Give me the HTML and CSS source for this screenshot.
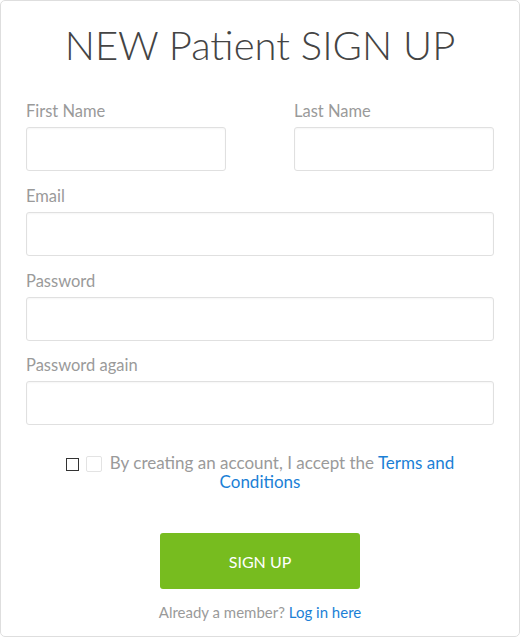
FILE: index.html
```html
<!DOCTYPE html>
<html>
<head>
<meta charset="utf-8">
<link rel="stylesheet" href="styles.css">
</head>
<body>
<div class="card">
  <h1 class="title">NEW Patient SIGN UP</h1>
  <form class="form">
    <div class="row-two">
      <div class="group">
        <label class="label">First Name</label>
        <input class="input" type="text">
      </div>
      <div class="group">
        <label class="label">Last Name</label>
        <input class="input" type="text">
      </div>
    </div>
    <div class="group">
      <label class="label">Email</label>
      <input class="input" type="text">
    </div>
    <div class="group">
      <label class="label">Password</label>
      <input class="input" type="password">
    </div>
    <div class="group">
      <label class="label">Password again</label>
      <input class="input" type="password">
    </div>
    <div class="terms">
      <span class="box box-dark"></span><span class="box box-light"></span>By creating an account, I accept the <a class="link" href="#">Terms and Conditions</a>
    </div>
    <div class="actions">
      <button class="btn" type="button">SIGN UP</button>
    </div>
    <p class="member">Already a member? <a class="link" href="#">Log in here</a></p>
  </form>
</div>
</body>
</html>
```
FILE: styles.css
```css
html, body {
  margin: 0;
  padding: 0;
  background: #fff;
}
body {
  font-family: Lato, "Noto Sans", sans-serif;
}
.card {
  box-sizing: border-box;
  width: 520px;
  height: 637px;
  border: 1px solid #dedede;
  border-radius: 5px;
  padding: 0 25px;
}
.title {
  margin: 0;
  padding-top: 20px;
  height: 100px;
  box-sizing: border-box;
  font-size: 40px;
  line-height: 48px;
  font-weight: 300;
  color: #444;
  text-align: center;
}
.form {
  margin: 0;
}
.row-two {
  display: flex;
  justify-content: space-between;
}
.row-two .group {
  width: 200px;
}
.group {
  display: flex;
  flex-direction: column;
  margin-bottom: 15px;
}
.group:nth-child(3) {
  margin-bottom: 14px;
}
.label {
  font-size: 16.5px;
  line-height: 20px;
  color: #9a9a9a;
  margin-bottom: 6px;
}
.input {
  box-sizing: border-box;
  height: 44px;
  width: 100%;
  margin: 0;
  border: 1px solid #e0e0e0;
  border-radius: 3px;
  background: #fff;
  box-shadow: inset 0 1px 2px rgba(0,0,0,0.04);
}
.terms {
  margin-top: 28px;
  text-align: center;
  font-size: 17px;
  line-height: 19px;
  color: #9a9a9a;
  padding: 0 10px;
}
.box {
  display: inline-block;
  vertical-align: -2px;
  box-sizing: border-box;
}
.box-dark {
  width: 13px;
  height: 13px;
  border: 1px solid #333;
  margin-right: 7px;
}
.box-light {
  width: 16px;
  height: 16px;
  border: 1px solid #e3e3e3;
  border-radius: 2px;
  margin-right: 8px;
  vertical-align: -3px;
}
.link {
  color: #1b7fd6;
  text-decoration: none;
}
.actions {
  display: flex;
  justify-content: center;
  margin-top: 42px;
}
.btn {
  width: 200px;
  height: 56px;
  border: 0;
  border-radius: 3px;
  background: #77bc1f;
  color: #fff;
  font-family: Lato, "Noto Sans", sans-serif;
  font-size: 16px;
}
.member {
  margin: 14px 0 0;
  text-align: center;
  font-size: 15px;
  line-height: 18px;
  color: #9a9a9a;
}
```
